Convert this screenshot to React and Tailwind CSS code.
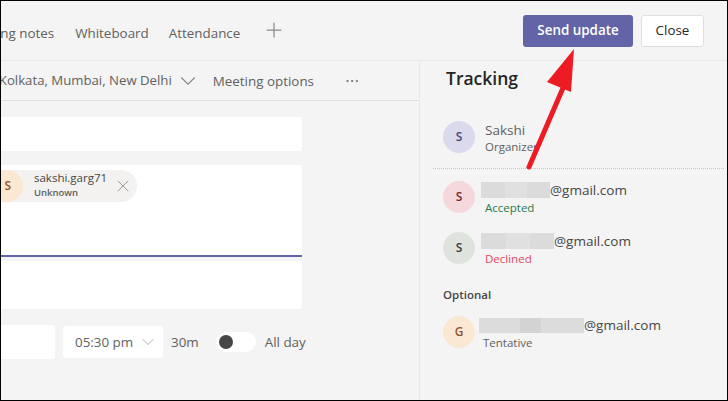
import { ChevronDown, MoreHorizontal, Plus, X } from 'lucide-react';

const FONT = "font-['Open_Sans','Noto_Sans',sans-serif]";

function Avatar({ letter, bg, color }) {
  return (
    <div className={`w-8 h-8 rounded-full flex items-center justify-center text-[12px] font-semibold shrink-0 ${bg} ${color}`}>
      {letter}
    </div>
  );
}

function Attendee({ letter, bg, color, redact, status, statusColor, gap }) {
  return (
    <div className="flex items-center h-8">
      <Avatar letter={letter} bg={bg} color={color} />
      <div className={`flex flex-col pt-[4px] ${gap}`}>
        <div className="flex items-center h-4 text-[13.5px] leading-4 text-[#484644]">
          {redact}
          <span>@gmail.com</span>
        </div>
        <span className={`text-[11.5px] leading-4 mt-[2px] ml-[4px] ${statusColor}`}>{status}</span>
      </div>
    </div>
  );
}

function Toolbar() {
  return (
    <div className="h-[40px] border-b border-[#e1dfdd] pr-[59px] pt-[1px] flex items-center justify-end text-[13.4px] text-[#616161] whitespace-nowrap">
      <span className="text-[13.2px]">Kolkata, Mumbai, New Delhi</span>
      <ChevronDown className="w-[26px] h-[26px] ml-[3px] mr-[12px] shrink-0 text-[#8a8886]" strokeWidth={1} />
      <span>Meeting options</span>
      <MoreHorizontal className="w-4 h-4 ml-[30px] shrink-0" strokeWidth={1.25} />
    </div>
  );
}

function Form() {
  return (
    <div className="pr-[117px] pt-[16px]">
      <div className="h-[34px] bg-white rounded-r-[3px]" />
      <div className="mt-[14px] h-[92px] bg-white rounded-tr-[3px] border-b-2 border-[#6264a7] pt-[5px]">
        <div className="flex items-center justify-between w-[136px] h-[32px] bg-[#f3f2f1] rounded-r-full pr-[4px]">
          <div className="flex items-center min-w-0">
            <div className="w-[22px] h-[32px] rounded-r-full bg-[#fbe8d3] text-[#8e562e] text-[12px] font-semibold flex items-center justify-end pr-[12px]">S</div>
            <div className="ml-[11px] flex flex-col">
              <span className="text-[11.5px] leading-[14px] text-[#484644]">sakshi.garg71</span>
              <span className="text-[9.5px] leading-[16px] font-semibold text-[#616161]">Unknown</span>
            </div>
          </div>
          <X className="w-5 h-5 text-[#8a8886] shrink-0" strokeWidth={1} />
        </div>
      </div>
      <div className="mt-[4px] h-[48px] bg-white rounded-r-[3px]" />
      <div className="mt-[16px] flex items-center text-[#616161] text-[13.4px] whitespace-nowrap -mr-[20px]">
        <div className="w-[54px] h-[34px] bg-white rounded-r-[3px] shrink-0" />
        <div className="ml-[8px] w-[100px] h-[32px] bg-white rounded-[3px] flex items-center pl-[12px] shrink-0">
          <span className="pt-[1px]">05:30 pm</span>
          <ChevronDown className="w-5 h-5 ml-[5px] shrink-0 text-[#a19f9d]" strokeWidth={1} />
        </div>
        <span className="ml-[8px] pt-[1px]">30m</span>
        <div className="ml-[17px] w-[40px] h-[20px] bg-white rounded-full flex items-center pl-[3px] shrink-0">
          <div className="w-[14px] h-[14px] rounded-full bg-[#484644]" />
        </div>
        <span className="ml-[9px] pt-[1px]">All day</span>
      </div>
    </div>
  );
}

function Tracking() {
  return (
    <div className="w-[308px] shrink-0 border-l border-[#e8e8e8] pt-[4px]">
      <h2 className="ml-[26px] text-[17.5px] leading-[26px] font-semibold text-[#252423]">Tracking</h2>
      <div className="ml-[23px] mt-[30px] flex items-center h-8">
        <Avatar letter="S" bg="bg-[#dbdaec]" color="text-[#464775]" />
        <div className="ml-[10px] flex flex-col pt-[2px]">
          <span className="text-[13.5px] leading-4 text-[#616161]">Sakshi</span>
          <span className="text-[11.5px] leading-4 mt-[1px] text-[#616161]">Organizer</span>
        </div>
      </div>
      <div className="ml-[13px] mr-[3px] mt-[15px] border-t border-dotted border-[#c8c6c4]" />
      <div className="ml-[23px] mt-[12px] flex flex-col">
        <Attendee
          letter="S"
          bg="bg-[#f4d8db]"
          color="text-[#802834]"
          gap="ml-[6px]"
          redact={
            <div className="w-[69px] h-4 bg-[#dbdbdb] shrink-0 flex justify-center">
              <div className="w-[22px] h-4 bg-[#e0e0e0]" />
            </div>
          }
          status="Accepted"
          statusColor="text-[#237b4b]"
        />
        <div className="mt-[19px]">
          <Attendee
            letter="S"
            bg="bg-[#dfe3dd]"
            color="text-[#3d3d3d]"
            gap="ml-[6px]"
            redact={
              <div className="w-[73px] h-4 bg-[#dbdbdb] shrink-0 flex justify-center">
                <div className="w-[24px] h-4 bg-[#e0e0e0]" />
              </div>
            }
            status="Declined"
            statusColor="text-[#e5485a]"
          />
        </div>
        <span className="mt-[23px] text-[11.5px] leading-4 font-semibold text-[#484644]">Optional</span>
        <div className="mt-[13px]">
          <Attendee
            letter="G"
            bg="bg-[#fbe8d3]"
            color="text-[#8e562e]"
            gap="ml-[4px]"
            redact={
              <div className="w-[105px] h-[15px] bg-[#dcdcdc] shrink-0 flex pl-[41px]">
                <div className="w-[21px] h-[15px] bg-[#d3d3d3]" />
              </div>
            }
            status="Tentative"
            statusColor="text-[#616161]"
          />
        </div>
      </div>
    </div>
  );
}

export default function App() {
  return (
    <div className={`relative w-[728px] h-[401px] overflow-hidden bg-[#f4f4f4] border border-black ${FONT}`}>
      <div className="h-[60px] border-b border-[#e8e8e8] flex items-center justify-between pr-[23px] whitespace-nowrap">
        <div className="flex items-center text-[13.4px] text-[#616161] -ml-[36px] pt-[5px]">
          <span>Meeting notes</span>
          <span className="ml-[21px]">Whiteboard</span>
          <span className="ml-[20px]">Attendance</span>
          <Plus className="w-6 h-6 ml-[22px] -mt-[5px] text-[#8a8886] shrink-0" strokeWidth={1.25} />
        </div>
        <div className="flex items-center gap-[8px]">
          <button className="w-[110px] h-[32px] rounded-[3px] bg-[#6264a7] text-white text-[13.4px] font-semibold">Send update</button>
          <button className="w-[63px] h-[32px] rounded-[3px] bg-white border border-[#e1dfdd] text-[#252423] text-[13.4px]">Close</button>
        </div>
      </div>
      <div className="flex h-[339px]">
        <div className="flex-1 min-w-0 overflow-hidden">
          <Toolbar />
          <Form />
        </div>
        <Tracking />
      </div>
      <svg className="absolute left-[-1px] top-[-1px] pointer-events-none" width="728" height="401" viewBox="0 0 728 401">
        <path d="M529 167 L566 81" stroke="#ed1c24" strokeWidth="5" strokeLinecap="round" fill="none" />
        <path d="M574 49 L571 92 L547 82 Z" fill="#ed1c24" />
      </svg>
    </div>
  );
}
